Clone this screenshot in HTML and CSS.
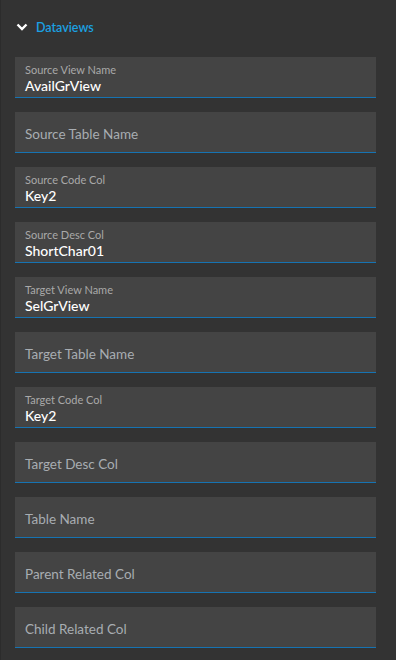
FILE: index.html
```html
<!DOCTYPE html>
<html lang="en">
<head>
  <meta charset="UTF-8">
  <meta name="viewport" content="width=device-width, initial-scale=1.0">
  <title>Dataviews</title>
  <link rel="stylesheet" href="styles.css">
</head>
<body>
  <div class="panel">
    <div class="section-head">
      <svg class="chevron" width="12" height="8" viewBox="0 0 12 8">
        <path d="M1.5 1.5 L6 6 L10.5 1.5" fill="none" stroke="#fff" stroke-width="2.4"/>
      </svg>
      <span>Dataviews</span>
    </div>

    <div class="fields">
      <div class="field filled">
        <label>Source View Name</label>
        <div class="value">AvailGrView</div>
      </div>
      <div class="field">
        <div class="placeholder">Source Table Name</div>
      </div>
      <div class="field filled">
        <label>Source Code Col</label>
        <div class="value">Key2</div>
      </div>
      <div class="field filled">
        <label>Source Desc Col</label>
        <div class="value">ShortChar01</div>
      </div>
      <div class="field filled">
        <label>Target View Name</label>
        <div class="value">SelGrView</div>
      </div>
      <div class="field">
        <div class="placeholder">Target Table Name</div>
      </div>
      <div class="field filled">
        <label>Target Code Col</label>
        <div class="value">Key2</div>
      </div>
      <div class="field">
        <div class="placeholder">Target Desc Col</div>
      </div>
      <div class="field">
        <div class="placeholder">Table Name</div>
      </div>
      <div class="field">
        <div class="placeholder">Parent Related Col</div>
      </div>
      <div class="field">
        <div class="placeholder">Child Related Col</div>
      </div>
    </div>
  </div>
</body>
</html>
```

FILE: styles.css
```css
* {
  box-sizing: border-box;
}
body {
  margin: 0;
  background: #333333;
  font-family: 'Lato', 'Open Sans', sans-serif;
  color: #fff;
}
.panel {
  min-height: 660px;
  border-left: 1px solid #2c2c2c;
  padding: 18px 20px 0 14px;
}
.section-head {
  display: flex;
  align-items: center;
  height: 18px;
  color: #1ba1e2;
  font-size: 12.5px;
  font-weight: 600;
}
.chevron {
  margin-left: 1px;
  margin-right: 8px;
}
.fields {
  display: flex;
  flex-direction: column;
  gap: 14px;
  margin-top: 21px;
}
.field {
  height: 41px;
  background: #444444;
  border-bottom: 1px solid #1673b2;
  padding: 0 10px;
  display: flex;
  flex-direction: column;
  justify-content: center;
}
.field.filled {
  justify-content: flex-start;
  padding-top: 6px;
}
.field label {
  font-size: 11px;
  line-height: 14px;
  color: #a9a9a9;
}
.field .value {
  font-size: 14px;
  font-weight: 500;
  line-height: 17px;
  color: #ffffff;
}
.placeholder {
  font-size: 13.5px;
  color: #a8adb2;
  padding-top: 4px;
}
```
